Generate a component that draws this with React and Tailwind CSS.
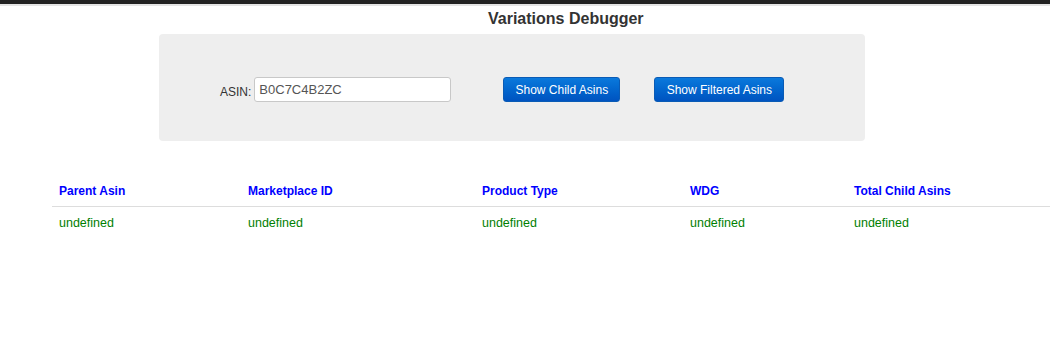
export default function App() {
  const cols = [
    { name: "Parent Asin", w: "w-[189px]" },
    { name: "Marketplace ID", w: "w-[234px]" },
    { name: "Product Type", w: "w-[208px]" },
    { name: "WDG", w: "w-[164px]" },
    { name: "Total Child Asins", w: "w-[210px]" },
  ];

  return (
    <div className="min-h-[359px] bg-white font-['Liberation_Sans',Arial,sans-serif] text-[#333]">
      <div className="h-[4px] bg-[#222]" />
      <div className="h-[2px] bg-[#e4e4e4]" />

      <h1 className="ml-[488px] mt-[3px] text-[16px] font-bold leading-[20px] text-[#333]">
        Variations Debugger
      </h1>

      {/* search panel */}
      <div className="ml-[159px] mt-[5px] flex h-[107px] w-[706px] items-center rounded-[4px] bg-[#eeeeee] pt-[4px]">
        <label className="ml-[61px] flex items-center text-[12px]">
          <span className="mr-[3px] mt-[4px]">ASIN:</span>
          <input
            type="text"
            defaultValue="B0C7C4B2ZC"
            className="h-[25px] w-[197px] rounded-[3px] border border-[#c8c8c8] bg-white px-[4px] text-[13px] text-[#555] outline-none"
          />
        </label>
        <button className="ml-[52px] h-[25px] w-[117px] rounded-[3px] border border-[#0a5bb5] bg-gradient-to-b from-[#0b79dc] to-[#0053c0] text-[12px] text-white">
          Show Child Asins
        </button>
        <button className="ml-[34px] h-[25px] w-[130px] rounded-[3px] border border-[#0a5bb5] bg-gradient-to-b from-[#0b79dc] to-[#0053c0] text-[12px] text-white">
          Show Filtered Asins
        </button>
      </div>

      {/* results */}
      <table className="ml-[52px] mt-[38px] w-[1005px] table-fixed border-collapse text-left">
        <thead>
          <tr className="border-b border-[#dddddd]">
            {cols.map((c) => (
              <th
                key={c.name}
                className={`${c.w} px-[7px] pb-[6px] pt-[3px] text-[12px] font-bold text-[#0000ff]`}
              >
                {c.name}
              </th>
            ))}
          </tr>
        </thead>
        <tbody>
          <tr>
            {cols.map((c) => (
              <td key={c.name} className="px-[7px] pt-[7px] text-[12.5px] text-[#008000]">
                undefined
              </td>
            ))}
          </tr>
        </tbody>
      </table>
    </div>
  );
}
